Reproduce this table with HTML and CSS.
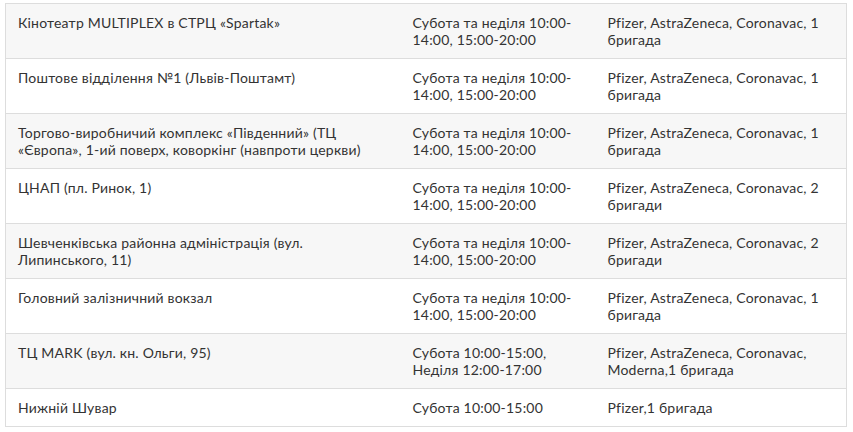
FILE: index.html
```html
<!DOCTYPE html>
<html lang="uk">
<head>
<meta charset="utf-8">
<link rel="stylesheet" href="styles.css">
</head>
<body>
<table class="schedule">
  <colgroup>
    <col class="c-place">
    <col class="c-time">
    <col class="c-vac">
  </colgroup>
  <tbody>
    <tr><td>Кінотеатр MULTIPLEX в СТРЦ «Spartak»</td><td>Субота та неділя 10:00-14:00, 15:00-20:00</td><td>Pfizer, AstraZeneca, Coronavac, 1 бригада</td></tr>
    <tr><td>Поштове відділення №1 (Львів-Поштамт)</td><td>Субота та неділя 10:00-14:00, 15:00-20:00</td><td>Pfizer, AstraZeneca, Coronavac, 1 бригада</td></tr>
    <tr><td>Торгово-виробничий комплекс «Південний» (ТЦ «Європа», 1-ий поверх, коворкінг (навпроти церкви)</td><td>Субота та неділя 10:00-14:00, 15:00-20:00</td><td>Pfizer, AstraZeneca, Coronavac, 1 бригада</td></tr>
    <tr><td>ЦНАП (пл. Ринок, 1)</td><td>Субота та неділя 10:00-14:00, 15:00-20:00</td><td>Pfizer, AstraZeneca, Coronavac, 2 бригади</td></tr>
    <tr><td>Шевченківська районна адміністрація (вул. Липинського, 11)</td><td>Субота та неділя 10:00-14:00, 15:00-20:00</td><td>Pfizer, AstraZeneca, Coronavac, 2 бригади</td></tr>
    <tr><td>Головний залізничний вокзал</td><td>Субота та неділя 10:00-14:00, 15:00-20:00</td><td>Pfizer, AstraZeneca, Coronavac, 1 бригада</td></tr>
    <tr><td>ТЦ MARK (вул. кн. Ольги, 95)</td><td>Субота 10:00-15:00, Неділя 12:00-17:00</td><td>Pfizer, AstraZeneca, Coronavac, Moderna,1 бригада</td></tr>
    <tr><td>Нижній Шувар</td><td>Субота 10:00-15:00</td><td>Pfizer,1 бригада</td></tr>
  </tbody>
</table>
</body>
</html>
```
FILE: styles.css
```css
html, body {
  margin: 0;
  padding: 0;
  background: #fff;
}
body {
  padding: 3px 0 0 5px;
  font-family: Lato, "Noto Sans", sans-serif;
  font-size: 14px;
  letter-spacing: 0.2px;
  color: #333;
}
.schedule {
  border-collapse: collapse;
  width: 841px;
  table-layout: fixed;
  border: 1px solid #ddd;
}
.c-place { width: 395px; }
.c-time { width: 195px; }
.c-vac { width: 251px; }
.schedule td {
  border-top: 1px solid #ddd;
  padding: 10px 12px;
  line-height: 17px;
  vertical-align: top;
  text-align: left;
}
.schedule tr:nth-child(odd) td {
  background: #f7f7f7;
}
```
